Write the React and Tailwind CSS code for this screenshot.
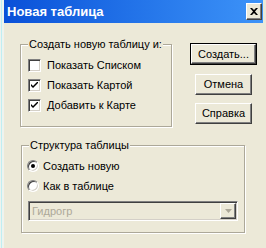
const font = { fontFamily: '"Liberation Sans", Arial, sans-serif' };

const CheckMark = () => (
  <svg width="7" height="7" viewBox="0 0 7 7" className="block">
    <path d="M0 2 L0 4 L2 6 L7 1 L7 -1 L2 4 Z" fill="#000" />
  </svg>
);

const Checkbox = ({ checked, label }) => (
  <div className="flex h-[20px] items-center">
    <span className="flex h-[13px] w-[13px] items-center justify-center border border-t-[#808080] border-l-[#808080] border-b-white border-r-white bg-white shadow-[inset_1px_1px_0_#404040,inset_-1px_-1px_0_#d4d0c8]">
      {checked && <CheckMark />}
    </span>
    <span className="ml-[6px]">{label}</span>
  </div>
);

const Radio = ({ checked, label }) => (
  <div className="flex h-[20px] items-center">
    <span className="flex h-[12px] w-[12px] items-center justify-center rounded-full border border-t-[#808080] border-l-[#808080] border-b-white border-r-white bg-white shadow-[inset_1px_1px_0_#404040,inset_-1px_-1px_0_#d4d0c8]">
      {checked && <span className="h-[4px] w-[4px] rounded-full bg-black" />}
    </span>
    <span className="ml-[4px]">{label}</span>
  </div>
);

const GroupBox = ({ title, className, children }) => (
  <div
    className={`relative border border-[#aca899] shadow-[inset_1px_1px_0_#fff,1px_1px_0_#fff] ${className}`}
  >
    <span className="absolute top-[-8px] left-[7px] bg-[#ece9d8] px-[1px] leading-[14px]">{title}</span>
    {children}
  </div>
);

const Button = ({ label, primary, className }) => (
  <button
    type="button"
    className={`flex items-center justify-center bg-[#ece9d8] ${
      primary ? 'border border-black' : ''
    } ${className}`}
  >
    <span className="flex h-full w-full items-center justify-center border border-t-white border-l-white border-b-[#404040] border-r-[#404040] shadow-[inset_-1px_-1px_0_#808080]">
      {label}
    </span>
  </button>
);

const App = () => {
  return (
    <div className="flex h-[248px] w-[266px] bg-[#ece9d8] text-[11px] text-black" style={font}>
      <div className="flex w-[4px] bg-[#eef3ee]">
        <div className="ml-[1px] w-[1px] bg-[#bfeef2]" />
      </div>
      <div className="flex flex-1 flex-col">
        <div className="mr-[3px] flex h-[23px] items-center bg-gradient-to-r from-[#0a50d8] to-[#3d93f8] pl-[3px]">
          <span className="text-[13px] font-bold text-white">Новая таблица</span>
          <button
            type="button"
            className="mr-[1px] ml-auto flex h-[17px] w-[16px] items-center justify-center border border-t-white border-l-white border-b-[#404040] border-r-[#404040] bg-[#ece9d8] shadow-[inset_-1px_-1px_0_#808080]"
          >
            <svg width="8" height="7" viewBox="0 0 8 7">
              <path d="M0 0h2l2 2 2-2h2L5 3.5 8 7H6L4 5 2 7H0l3-3.5z" fill="#000" />
            </svg>
          </button>
        </div>

        <div className="flex flex-1 flex-col pt-[21px] pl-[16px]">
          <div className="flex">
            <GroupBox title="Создать новую таблицу и:" className="h-[83px] w-[152px] pt-[10px] pl-[7px]">
              <Checkbox label="Показать Списком" />
              <Checkbox checked label="Показать Картой" />
              <Checkbox checked label="Добавить к Карте" />
            </GroupBox>
            <div className="-mt-[1px] ml-[18px] flex flex-col items-center">
              <Button primary label="Создать..." className="h-[22px] w-[67px]" />
              <Button label="Отмена" className="mt-[9px] h-[21px] w-[57px]" />
              <Button label="Справка" className="mt-[8px] h-[21px] w-[57px]" />
            </div>
          </div>

          <GroupBox title="Структура таблицы" className="mt-[18px] ml-[1px] h-[88px] w-[224px] pt-[10px] pl-[5px]">
            <Radio checked label="Создать новую" />
            <Radio label="Как в таблице" />
            <div className="mt-[5px] ml-[1px] flex h-[20px] w-[210px] items-center border border-t-[#808080] border-l-[#808080] border-b-white border-r-white shadow-[inset_1px_1px_0_#404040,inset_-1px_-1px_0_#d4d0c8]">
              <span className="ml-[3px] flex-1 text-[#aca899]">Гидрогр</span>
              <span className="mr-[1px] flex h-[16px] w-[16px] items-center justify-center border border-t-white border-l-white border-b-[#404040] border-r-[#404040] bg-[#ece9d8] shadow-[inset_-1px_-1px_0_#808080]">
                <svg width="7" height="4" viewBox="0 0 7 4">
                  <path d="M0 0h7L3.5 4z" fill="#aca899" />
                </svg>
              </span>
            </div>
          </GroupBox>
        </div>
      </div>
    </div>
  );
};

export default App;
